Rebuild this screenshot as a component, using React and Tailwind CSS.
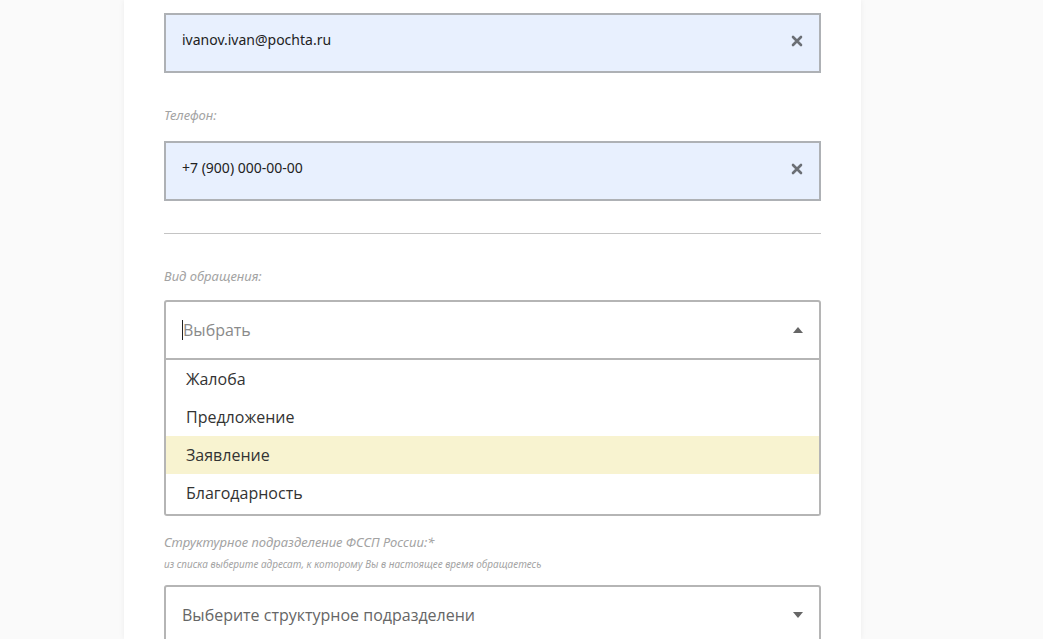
export default function App() {
  const X = () => (
    <svg width="12" height="12" viewBox="0 0 12 12"><path d="M2 2L10 10M10 2L2 10" stroke="#6b6f75" strokeWidth="2.6" strokeLinecap="round"/></svg>
  );
  const label = "text-[13px] italic text-[#a3a3a3] leading-none";
  const noto = {fontFamily:'"Noto Sans", sans-serif'};
  return (
    <div className="w-[1043px] h-[639px] overflow-hidden bg-[#fafafa] flex justify-center" style={{fontFamily:'"Open Sans", sans-serif'}}>
      <div className="w-[737px] ml-[-58px] h-full bg-white shadow-[0_0_6px_rgba(0,0,0,0.06)] px-10 pt-[13px]">
        <div className="h-[60px] border-2 border-[#aeb1b5] bg-[#e8f0fe] flex items-center justify-between pl-4 pr-4 pb-[4px]" style={noto}>
          <span className="text-[14px] text-[#222] mt-[-4px]">ivanov.ivan@pochta.ru</span><X />
        </div>
        <div className={label + " mt-[36px]"} style={noto}>Телефон:</div>
        <div className="mt-[19px] h-[60px] border-2 border-[#aeb1b5] bg-[#e8f0fe] flex items-center justify-between pl-4 pr-4 pb-[4px]" style={noto}>
          <span className="text-[14px] text-[#222] mt-[-4px]">+7 (900) 000-00-00</span><X />
        </div>
        <div className="mt-[32px] h-px bg-[#c4c4c4]" />
        <div className={label + " mt-[36px]"} style={noto}>Вид обращения:</div>
        <div className="mt-[17px] h-[60px] border-2 border-[#b5b5b5] rounded-t-[3px] flex items-center justify-between pl-4 pr-4">
          <span className="text-[16px] text-[#8a8a8a] border-l border-[#222] leading-5">Выбрать</span>
          <svg width="10" height="6" viewBox="0 0 10 6"><path d="M0 6L5 0L10 6Z" fill="#666"/></svg>
        </div>
        <div className="h-[156px] border-2 border-t-0 border-[#b5b5b5] rounded-b-[3px] pt-[0px] text-[16px] text-[#333]">
          {["Жалоба","Предложение","Заявление","Благодарность"].map((t,i)=>(
            <div key={t} className={"h-[38px] flex items-center pl-5 " + (i===2 ? "bg-[#f8f3d0]" : "")}>{t}</div>
          ))}
        </div>
        <div className={label + " mt-[20px]"} style={noto}>Структурное подразделение ФССП России:*</div>
        <div className="text-[10px] italic text-[#a3a3a3] mt-[10px] leading-none" style={noto}>из списка выберите адресат, к которому Вы в настоящее время обращаетесь</div>
        <div className="mt-[16px] h-[60px] border-2 border-[#b5b5b5] rounded-[3px] flex items-center justify-between pl-4 pr-4">
          <span className="text-[16px] text-[#666]">Выберите структурное подразделени</span>
          <svg width="10" height="6" viewBox="0 0 10 6"><path d="M0 0L5 6L10 0Z" fill="#666"/></svg>
        </div>
      </div>
    </div>
  );
}
